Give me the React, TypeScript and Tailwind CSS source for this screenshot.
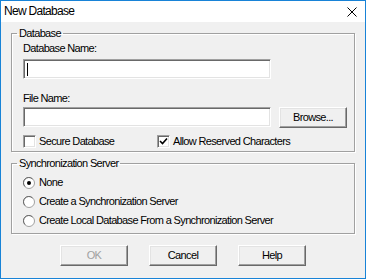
import React from "react";

const sunken =
  "border border-t-[#a0a0a0] border-l-[#a0a0a0] border-b-white border-r-white shadow-[inset_1px_1px_0_#696969,inset_-1px_-1px_0_#e3e3e3] bg-white";
const raised =
  "border border-t-white border-l-white border-b-[#696969] border-r-[#696969] shadow-[inset_-1px_-1px_0_#a0a0a0,inset_1px_1px_0_#e3e3e3] bg-[#f0f0f0]";
const etched = "border border-[#a0a0a0] shadow-[inset_1px_1px_0_#fff,1px_1px_0_#fff]";

function Checkbox({ checked }: { checked?: boolean }) {
  return (
    <div className={`w-[13px] h-[13px] flex items-center justify-center ${sunken}`}>
      {checked && (
        <svg width="9" height="9" viewBox="0 0 9 9">
          <path d="M1 4 L3.5 6.5 L8 1.5" fill="none" stroke="#000" strokeWidth="1.6" />
        </svg>
      )}
    </div>
  );
}

function Radio({ checked }: { checked?: boolean }) {
  return (
    <svg width="12" height="12" viewBox="0 0 12 12">
      <circle cx="6" cy="6" r="5.5" fill="#fff" stroke="#a0a0a0" />
      <path d="M2 9.5 A5 5 0 0 1 9.5 2" fill="none" stroke="#696969" />
      {checked && <circle cx="6" cy="6" r="2" fill="#000" />}
    </svg>
  );
}

function Button({ label, disabled }: { label: string; disabled?: boolean }) {
  return (
    <button
      className={`w-[68px] h-[21px] flex items-center justify-center ${raised} ${
        disabled ? "text-[#a0a0a0]" : "text-black"
      }`}
    >
      {label}
    </button>
  );
}

export default function App() {
  const options = [
    { label: "None", checked: true },
    { label: "Create a Synchronization Server" },
    { label: "Create Local Database From a Synchronization Server" },
  ];

  return (
    <div className="w-[366px] h-[279px] border border-[#1883d7] bg-[#f0f0f0] flex flex-col font-['Liberation_Sans',Arial,sans-serif] text-[11px] leading-[13px] tracking-[-0.65px] text-black">
      {/* Title bar */}
      <div className="h-[21px] bg-white flex items-center justify-between pl-[3px] pr-[8px]">
        <span className="text-[12px] tracking-[-0.7px] text-[#000]">New Database</span>
        <svg width="10" height="10" viewBox="0 0 10 10">
          <path d="M0.5 0.5 L9.5 9.5 M9.5 0.5 L0.5 9.5" stroke="#000" strokeWidth="1" />
        </svg>
      </div>

      <div className="px-[10px] pt-[5px] flex flex-col">
        {/* Database group */}
        <fieldset className={etched}>
          <legend className="ml-[5px] px-[2px]">Database</legend>
          <div className="pl-[11px] pt-[2px] pb-[3px] flex flex-col">
            <span>Database Name:</span>
            <div className={`mt-[4px] w-[248px] h-[20px] flex items-center pl-[3px] ${sunken}`}>
              <div className="w-[1px] h-[13px] bg-black" />
            </div>
            <span className="mt-[13px]">File Name:</span>
            <div className="mt-[2px] flex items-start gap-[8px]">
              <div className={`w-[248px] h-[20px] ${sunken}`} />
              <Button label="Browse..." />
            </div>
            <div className="mt-[7px] flex items-center">
              <div className="w-[134px] flex items-center gap-[3px]">
                <Checkbox />
                <span>Secure Database</span>
              </div>
              <div className="flex items-center gap-[3px]">
                <Checkbox checked />
                <span>Allow Reserved Characters</span>
              </div>
            </div>
          </div>
        </fieldset>

        {/* Synchronization group */}
        <fieldset className={`mt-[5px] ${etched}`}>
          <legend className="ml-[5px] px-[2px]">Synchronization Server</legend>
          <div className="pl-[11px] pt-[6px] pb-[6px] flex flex-col gap-[6px]">
            {options.map((o) => (
              <div key={o.label} className="flex items-center gap-[4px] h-[13px]">
                <Radio checked={o.checked} />
                <span>{o.label}</span>
              </div>
            ))}
          </div>
        </fieldset>

        <div className="mt-[11px] flex justify-center gap-[21px]">
          <Button label="OK" disabled />
          <Button label="Cancel" />
          <Button label="Help" />
        </div>
      </div>
    </div>
  );
}
